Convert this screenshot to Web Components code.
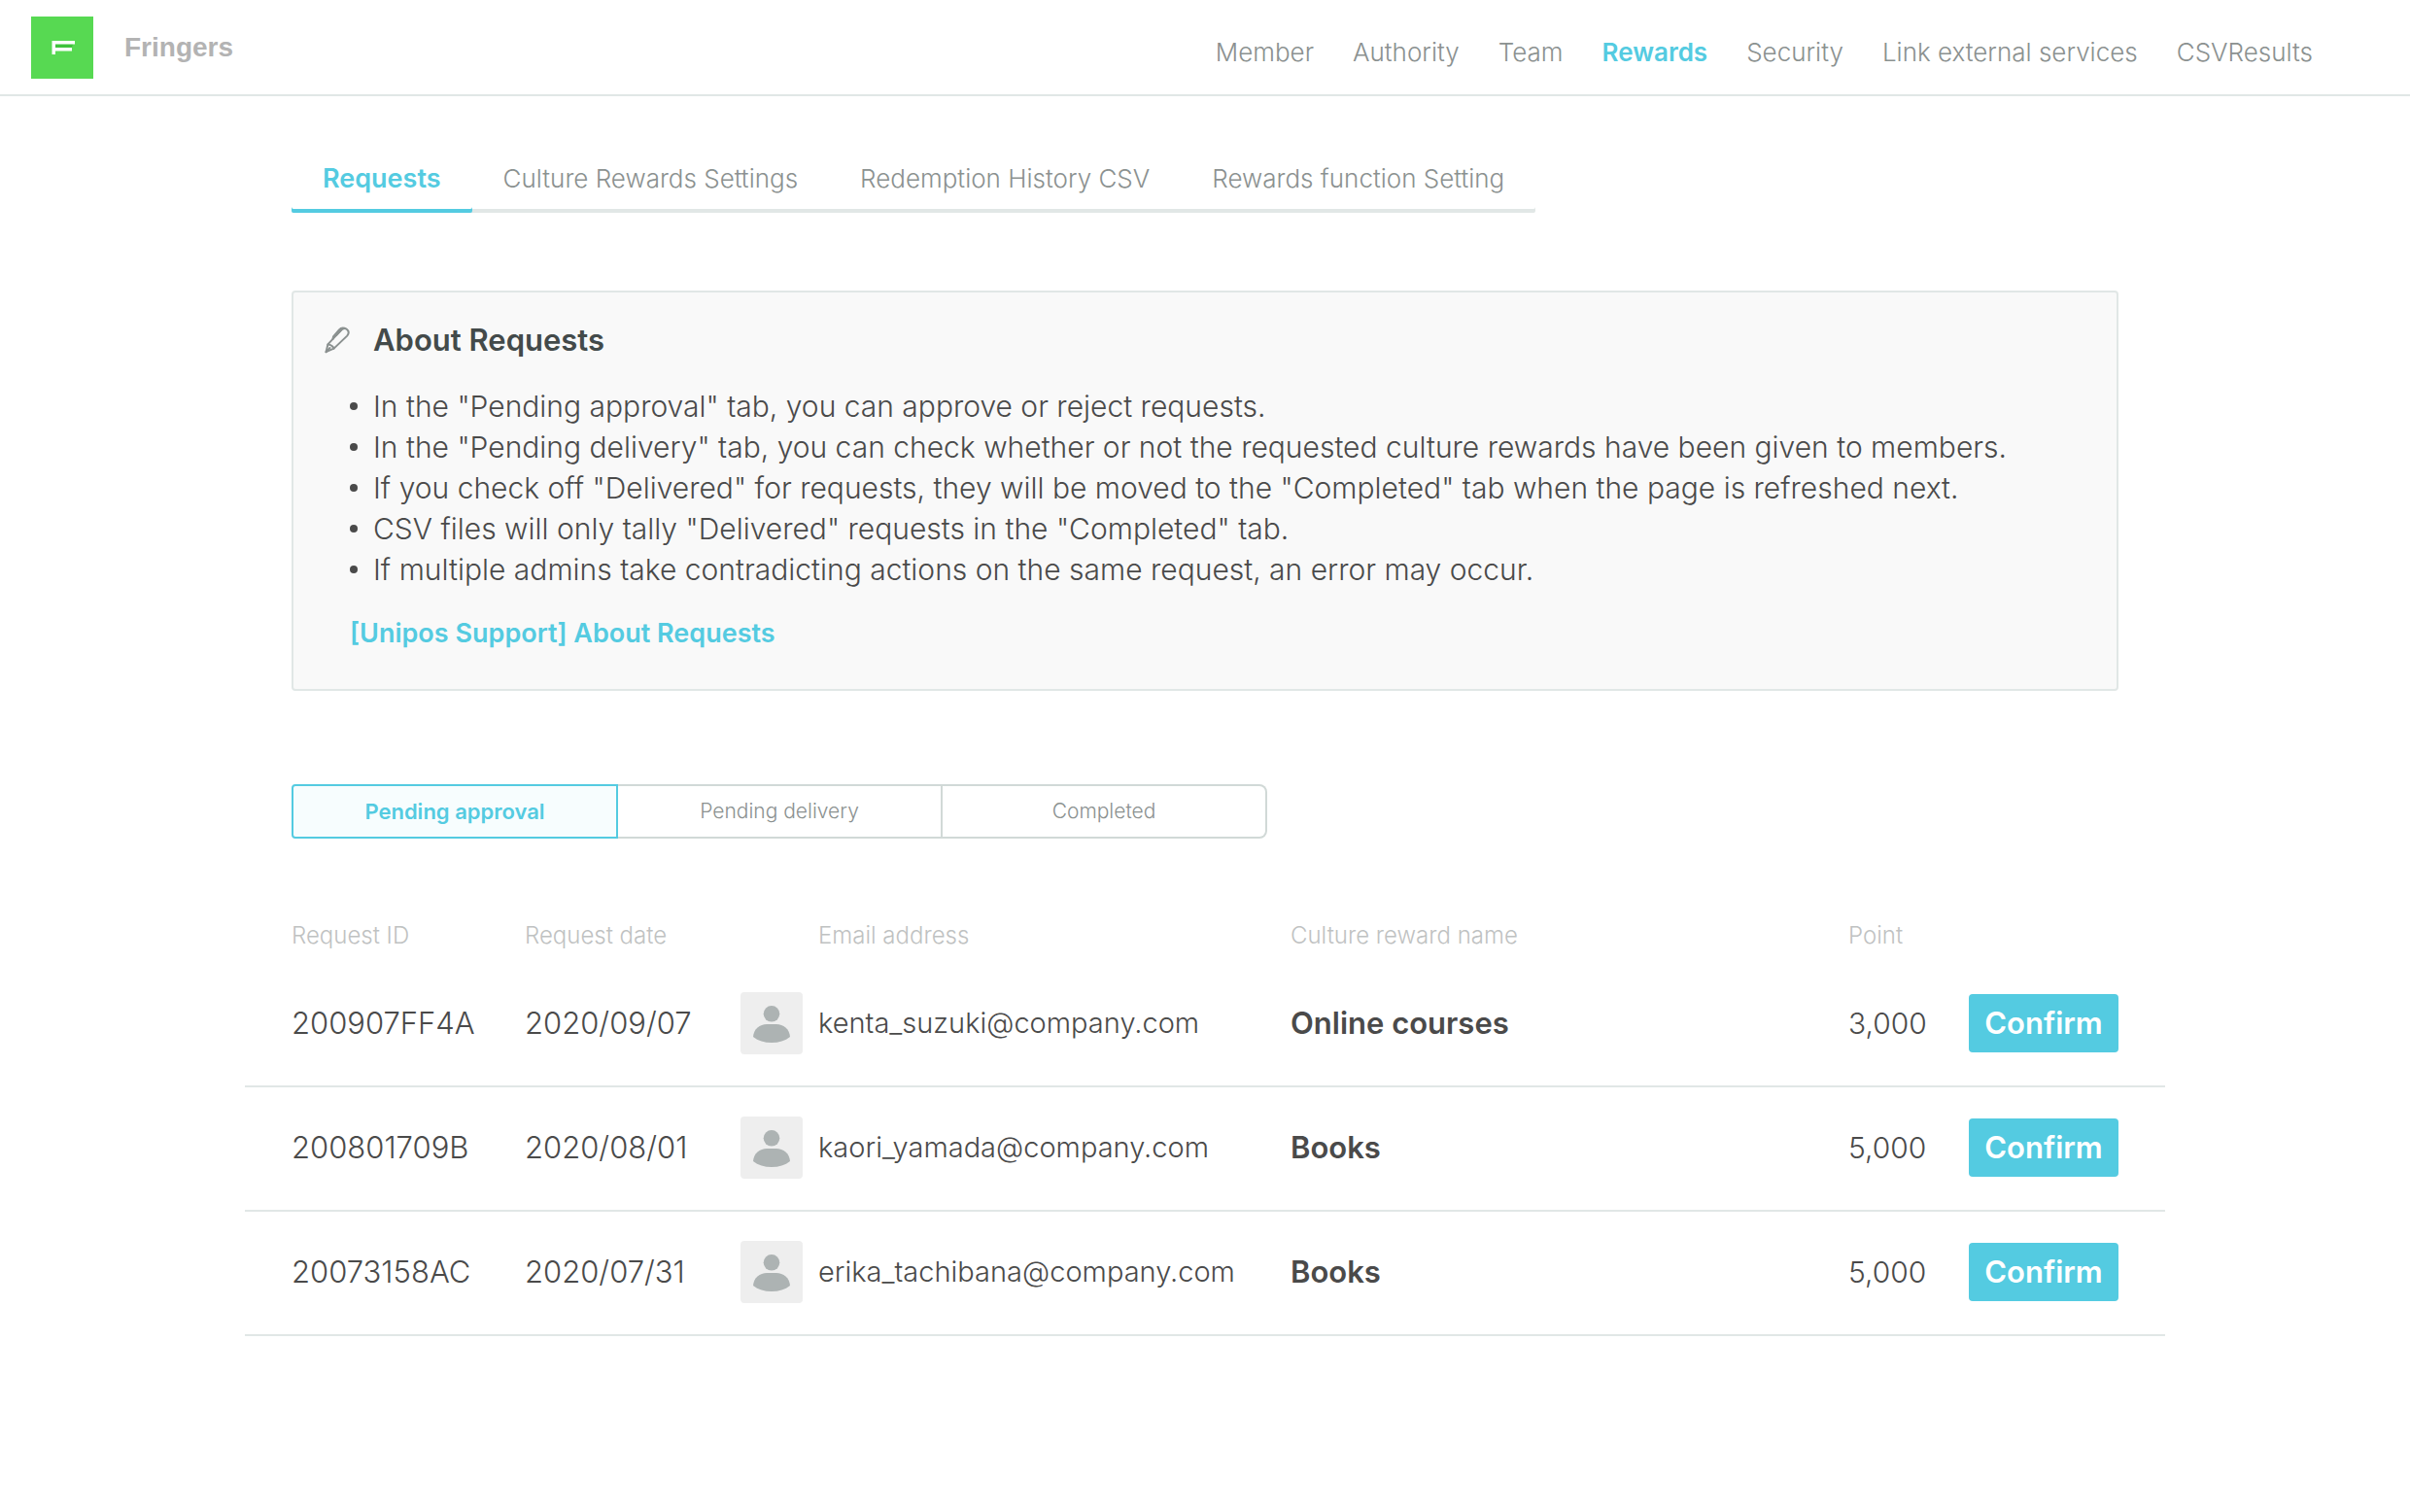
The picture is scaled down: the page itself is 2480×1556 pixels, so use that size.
<!DOCTYPE html>
<html lang="en">
<head>
<meta charset="utf-8">
<meta name="viewport" content="width=device-width, initial-scale=1">
<title>Fringers – Rewards</title>
<style>
  :root {
    --accent: #54cbe1;
    --text: #4a4a4a;
    --muted: #8b9190;
    --line: #e1e7e6;
  }
  body {
    margin: 0;
    background: #fff;
    color: var(--text);
    font-family: Inter, "Noto Sans", sans-serif;
    font-weight: 300;
  }
  main {
    box-sizing: border-box;
    max-width: 1976px;
    margin: 0 auto;
    padding: 52px 48px 80px;
  }
</style>
</head>
<body>
<site-header brand="Fringers">
  <nav-link href="#member">Member</nav-link>
  <nav-link href="#authority">Authority</nav-link>
  <nav-link href="#team">Team</nav-link>
  <nav-link href="#rewards" current>Rewards</nav-link>
  <nav-link href="#security">Security</nav-link>
  <nav-link href="#services">Link external services</nav-link>
  <nav-link href="#csv">CSVResults</nav-link>
</site-header>
<main>
  <tab-bar>
    <tab-link href="#requests" current>Requests</tab-link>
    <tab-link href="#settings">Culture Rewards Settings</tab-link>
    <tab-link href="#history">Redemption History CSV</tab-link>
    <tab-link href="#function">Rewards function Setting</tab-link>
  </tab-bar>
  <info-panel>
    <span slot="title">About Requests</span>
    <info-item>In the "Pending approval" tab, you can approve or reject requests.</info-item>
    <info-item>In the "Pending delivery" tab, you can check whether or not the requested culture rewards have been given to members.</info-item>
    <info-item>If you check off "Delivered" for requests, they will be moved to the "Completed" tab when the page is refreshed next.</info-item>
    <info-item>CSV files will only tally "Delivered" requests in the "Completed" tab.</info-item>
    <info-item>If multiple admins take contradicting actions on the same request, an error may occur.</info-item>
    <span slot="link">[Unipos Support] About Requests</span>
  </info-panel>
  <status-switch></status-switch>
  <request-table></request-table>
</main>
<script>
  class BaseElement extends HTMLElement {
    connectedCallback() {
      if (this.shadowRoot) return;
      this.attachShadow({ mode: 'open' }).innerHTML = this.render();
    }
  }

  customElements.define('site-header', class extends BaseElement {
    render() {
      return `<style>
        :host { display: block; border-bottom: 2px solid var(--line); }
        header { display: flex; align-items: center; padding: 17px 100px 16px 32px; }
        svg { display: block; width: 64px; height: 64px; flex: none; }
        .brand { margin-left: 32px; font: 700 28px/32px "Liberation Sans", Arial, sans-serif; color: #b3b3b3; }
        nav { display: flex; gap: 40px; margin-left: auto; padding-top: 10px; }
      </style>
      <header>
        <svg viewBox="0 0 64 64" aria-hidden="true">
          <rect width="64" height="64" fill="#57d952"/>
          <path d="M25 28H43L42 32H25z" fill="#3fc23c"/>
          <path d="M21.500 25H45V28.500H25V32H42V35.500H25V39H21.500z" fill="#fff"/>
        </svg>
        <span class="brand">${this.getAttribute('brand')}</span>
        <nav><slot></slot></nav>
      </header>`;
    }
  });

  customElements.define('nav-link', class extends BaseElement {
    render() {
      return `<style>
        :host { display: block; font-size: 26px; line-height: 32px; white-space: nowrap; }
        a { color: var(--muted); text-decoration: none; }
        :host([current]) a { color: var(--accent); font-weight: 600; }
      </style><a href="${this.getAttribute('href')}"><slot></slot></a>`;
    }
  });

  customElements.define('tab-bar', class extends BaseElement {
    render() {
      return `<style>
        :host { display: flex; }
        nav { display: flex; border-radius: 2px; box-shadow: inset 0 -4px var(--line); }
      </style><nav><slot></slot></nav>`;
    }
  });

  customElements.define('tab-link', class extends BaseElement {
    render() {
      return `<style>
        :host { display: block; font-size: 26px; line-height: 66px; white-space: nowrap; }
        a { display: block; padding: 0 32px 2px; border-radius: 2px; color: var(--muted); text-decoration: none; }
        :host([current]) a { color: var(--accent); font-size: 27px; font-weight: 600; box-shadow: inset 0 -4px var(--accent); }
      </style><a href="${this.getAttribute('href')}"><slot></slot></a>`;
    }
  });

  customElements.define('info-panel', class extends BaseElement {
    render() {
      return `<style>
        :host { display: block; margin-top: 80px; }
        section { padding: 29px 32px 41px; border: 2px solid var(--line); border-radius: 4px; background: #f9f9f9; }
        h2 { display: flex; align-items: center; gap: 22px; margin: 0; font-size: 31px; line-height: 40px; font-weight: 600; color: #434a4a; }
        svg { width: 28px; height: 28px; fill: none; stroke: #8b9190; stroke-width: 2; stroke-linecap: round; stroke-linejoin: round; }
        .items { padding: 27px 0 29px 26px; }
        a { margin-left: 26px; font-size: 27px; line-height: 32px; font-weight: 600; color: var(--accent); text-decoration: none; display: inline-block; vertical-align: top; }
      </style>
      <section>
        <h2>
          <svg viewBox="0 0 28 28" aria-hidden="true">
            <path d="M1.500 26.200L3.400 18.400L16.500 4.400C18.600 2.200 20.800 1.200 23 3C25.400 5 25 7.400 23.200 9.600L9.600 22.600z"/>
            <path d="M3.400 18.400C6 18.600 8.800 20.600 9.600 22.600M1.500 26.200L5.500 22"/>
            <path d="M8.500 13L9 10.500L15 3.400C16.400 1.700 18.400 1 20.600 1.700M12 9L16.500 4.400"/>
          </svg>
          <slot name="title"></slot>
        </h2>
        <div class="items" role="list"><slot></slot></div>
        <a href="#support"><slot name="link"></slot></a>
      </section>`;
    }
  });

  customElements.define('info-item', class extends BaseElement {
    connectedCallback() { this.setAttribute('role', 'listitem'); super.connectedCallback(); }
    render() {
      return `<style>
        :host { display: flex; align-items: center; gap: 16px; font-size: 30px; line-height: 42px; }
        :host::before { content: ""; flex: none; width: 8px; height: 8px; border-radius: 50%; background: var(--text); }
      </style><span><slot></slot></span>`;
    }
  });

  customElements.define('status-switch', class extends BaseElement {
    render() {
      return `<style>
        :host { display: flex; margin-top: 96px; max-width: 1004px; }
        button { flex: 1; height: 56px; margin: 0; padding: 0; border: 2px solid #d1d9d7; background: #fff;
          font: 300 21px/32px Inter, sans-serif; color: var(--muted); }
        button + button { border-left: 0; }
        button:last-child { border-radius: 0 8px 8px 0; }
        button[aria-pressed=true] { border-color: var(--accent); border-radius: 4px 0 0 4px; background: #f7fdfe;
          font-size: 22px; font-weight: 600; color: var(--accent); }
      </style>
      <button type="button" aria-pressed="true">Pending approval</button>
      <button type="button" aria-pressed="false">Pending delivery</button>
      <button type="button" aria-pressed="false">Completed</button>`;
    }
  });

  customElements.define('user-avatar', class extends BaseElement {
    render() {
      return `<style>
        :host { display: block; width: 64px; height: 64px; }
        svg { display: block; width: 100%; height: 100%; }
      </style>
      <svg viewBox="0 0 64 64" aria-hidden="true">
        <rect width="64" height="64" rx="4" fill="#eee"/>
        <circle cx="32" cy="22.300" r="8.300" fill="#adb3b3"/>
        <path d="M27 33H37C44 33 50.500 38 51 46C46 50 39.500 52 32 52S18 50 13 46C13.500 38 20 33 27 33z" fill="#adb3b3"/>
      </svg>`;
    }
  });

  customElements.define('confirm-button', class extends BaseElement {
    render() {
      return `<style>
        :host { display: block; }
        button { display: block; width: 154px; height: 60px; padding: 0; border: 0; border-radius: 4px;
          background: var(--accent); color: #fff; font: 600 31px/40px Inter, sans-serif; }
      </style><button type="button"><slot></slot></button>`;
    }
  });

  const requests = [
    ['200907FF4A', '2020/09/07', 'kenta_suzuki@company.com', 'Online courses', '3,000'],
    ['200801709B', '2020/08/01', 'kaori_yamada@company.com', 'Books', '5,000'],
    ['20073158AC', '2020/07/31', 'erika_tachibana@company.com', 'Books', '5,000']
  ];

  customElements.define('request-table', class extends BaseElement {
    render() {
      const rows = requests.map(([id, date, email, reward, point]) => `<tr>
        <td>${id}</td><td>${date}</td><td><user-avatar></user-avatar></td><td class="compact">${email}</td>
        <td class="reward">${reward}</td><td class="point">${point}</td><td><confirm-button>Confirm</confirm-button></td>
      </tr>`).join('');
      return `<style>
        :host { display: block; margin: 80px -48px 0; }
        table { width: 100%; table-layout: fixed; border-collapse: separate; border-spacing: 0; }
        th { height: 40px; padding: 0 0 8px; text-align: left; font-size: 24px; line-height: 40px; font-weight: 300; color: #bfc2c2; }
        td { padding: 30px 0 32px; border-bottom: 2px solid var(--line); font-size: 31px; line-height: 40px; vertical-align: middle; }
        th:first-child, td:first-child { padding-left: 48px; }
        td.compact { font-size: 29px; }
        td.point { font-size: 30px; }
        .reward { font-weight: 600; }
        col.id { width: 288px; } col.date { width: 222px; } col.avatar { width: 80px; }
        col.email { width: 486px; } col.point { width: 124px; } col.action { width: 202px; }
      </style>
      <table>
        <colgroup><col class="id"><col class="date"><col class="avatar"><col class="email"><col><col class="point"><col class="action"></colgroup>
        <thead><tr><th>Request ID</th><th>Request date</th><th></th><th>Email address</th><th>Culture reward name</th><th>Point</th><th></th></tr></thead>
        <tbody>${rows}</tbody>
      </table>`;
    }
  });
</script>
</body>
</html>
